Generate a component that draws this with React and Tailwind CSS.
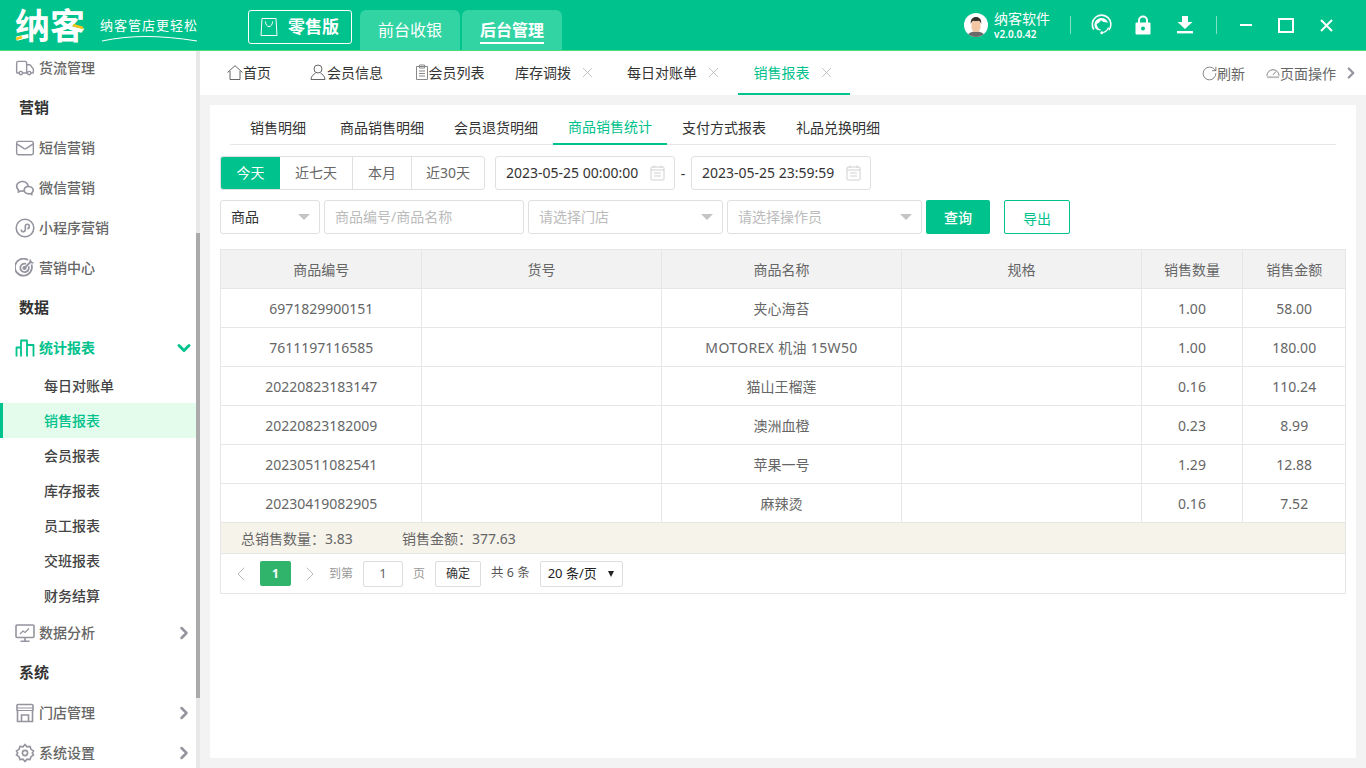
import React from 'react';
import { ChevronRight, ChevronLeft, ChevronDown, X, Truck, Mail, RotateCw } from 'lucide-react';
import { RiWechatLine } from 'react-icons/ri';

const ROWS = [
  ['6971829900151', '夹心海苔', '1.00', '58.00'],
  ['7611197116585', 'MOTOREX 机油 15W50', '1.00', '180.00'],
  ['20220823183147', '猫山王榴莲', '0.16', '110.24'],
  ['20220823182009', '澳洲血橙', '0.23', '8.99'],
  ['20230511082541', '苹果一号', '1.29', '12.88'],
  ['20230419082905', '麻辣烫', '0.16', '7.52'],
];

const SUB_TABS = ['销售明细', '商品销售明细', '会员退货明细', '商品销售统计', '支付方式报表', '礼品兑换明细'];
const REPORTS = ['每日对账单', '销售报表', '会员报表', '库存报表', '员工报表', '交班报表', '财务结算'];

function MiniProgramIcon() {
  return (
    <svg width="20" height="20" viewBox="0 0 20 20" fill="none" stroke="#94949f" strokeWidth="1.6">
      <circle cx="10" cy="10" r="8.8" />
      <path d="M6.2 11.5c0 1.4 1 2.3 2.1 2.3s2-.9 2-2.2V8.4c0-1.3.9-2.2 2-2.2s2 .9 2 2.2-1 2.2-2.1 2.2" />
    </svg>
  );
}

function TargetIcon() {
  return (
    <svg width="20" height="20" viewBox="0 0 20 20" fill="none" stroke="#94949f" strokeWidth="1.8">
      <path d="M16.500 6.500A8.500 8.500 0 1 1 13 2" />
      <path d="M13.600 8.300A4.300 4.300 0 1 1 11 5.800" />
      <circle cx="9.500" cy="10" r="1.200" fill="#94949f" />
      <path d="M9.500 10l7-7" />
      <path d="M15 1.500l.6 2.900 2.900.6" strokeWidth="1.500" />
    </svg>
  );
}

function BarsIcon() {
  return (
    <svg width="20" height="20" viewBox="0 0 20 20" fill="none" stroke="#00c28c" strokeWidth="1.800" strokeLinejoin="round">
      <path d="M1.500 18.500v-9h4.500v9M6 18.500V2.500h6v16M12 18.500V7h6.500v11.500" />
    </svg>
  );
}

function MonitorIcon() {
  return (
    <svg width="20" height="20" viewBox="0 0 20 20" fill="none" stroke="#94949f" strokeWidth="1.600">
      <rect x="1" y="2" width="18" height="12.500" rx="1" />
      <path d="M10 14.500v3.500M5.500 18.200h9" />
      <path d="M5 11l3-3 2 1.500L14 5.500" strokeWidth="1.200" />
    </svg>
  );
}

function StoreIcon() {
  return (
    <svg width="20" height="20" viewBox="0 0 20 20" fill="none" stroke="#94949f" strokeWidth="1.600">
      <path d="M3 1.500h14a1 1 0 0 1 1 1V8M2 8V2.500a1 1 0 0 1 1-1" />
      <path d="M2 7.500h16M2 5h16" strokeWidth="1.200" />
      <path d="M2.500 8v10.500h15V8" />
      <path d="M6.500 18.500V12h7v6.500" />
    </svg>
  );
}

function GearIcon() {
  return (
    <svg width="20" height="20" viewBox="0 0 20 20" fill="none" stroke="#94949f" strokeWidth="1.600">
      <path d="M10 1.500l2 2.300 3-.4 1 2.900 2.500 1.700L17.300 10l1.200 2-2.500 1.700-1 2.900-3-.4-2 2.300-2-2.300-3 .4-1-2.900L1.500 12l1.200-2-1.200-2L4 6.300l1-2.900 3 .4z" />
      <circle cx="10" cy="10" r="2.600" />
    </svg>
  );
}

function CalendarIcon() {
  return (
    <svg width="15" height="16" viewBox="0 0 15 16" fill="none" stroke="#d0d0d0" strokeWidth="1">
      <rect x="1" y="2" width="13" height="13" rx="1" />
      <path d="M1 5h13M4 .5v2.500M11 .5v2.500M4 8h7M4 11h7" />
    </svg>
  );
}

function Caret() {
  return <span className="w-0 h-0 mt-[2px] border-x-[6px] border-x-transparent border-t-[6px] border-t-[#c4c4c4]" />;
}

function Headset() {
  return (
    <svg width="21" height="22" viewBox="0 0 21 22" fill="none">
      <path d="M2.800 15.500A9.300 9.300 0 1 1 18 16" stroke="#fff" strokeWidth="1.600" />
      <path d="M3.500 10c.5-3.500 3.500-6 7-6 3 0 5.500 1.800 6.500 4.500-2.500.2-5.500-.4-7-2.200C9 8.200 7 9.500 5.600 10c.4 3 2.300 5.500 5 6-2.500 1.300-7.700-.5-7.100-6z" fill="#fff" />
      <path d="M17.500 13.500c-1 2.800-3.200 4.500-5.500 5" stroke="#fff" strokeWidth="1.200" />
      <circle cx="10.800" cy="18.700" r="1.500" fill="#fff" />
    </svg>
  );
}

function LockIcon() {
  return (
    <svg width="16" height="20" viewBox="0 0 16 20" className="block">
      <path d="M4 8V5.500a4 4 0 0 1 8 0V8" fill="none" stroke="#fff" strokeWidth="2" />
      <path fillRule="evenodd" d="M1.500 7.500h13a1 1 0 0 1 1 1v10a1 1 0 0 1-1 1h-13a1 1 0 0 1-1-1v-10a1 1 0 0 1 1-1zM8 11.500a2 2 0 1 0 0 4 2 2 0 0 0 0-4z" fill="#fff" />
    </svg>
  );
}

function DownloadIcon() {
  return (
    <svg width="16" height="18" viewBox="0 0 16 18" fill="#fff" className="block">
      <path d="M5 0h6v6h4.500L8 13 .5 6H5z" />
      <rect x="0" y="15" width="16" height="2.400" />
    </svg>
  );
}

function Avatar() {
  return (
    <svg width="24" height="24" viewBox="0 0 24 24" className="shrink-0">
      <clipPath id="avatar-clip"><circle cx="12" cy="12" r="12" /></clipPath>
      <g clipPath="url(#avatar-clip)">
        <rect width="24" height="24" fill="#fff" />
        <path d="M3 25c0-5 4-6.500 9-6.500s9 1.500 9 6.500z" fill="#6b6b6b" />
        <rect x="7.500" y="6" width="9" height="13" rx="4.500" fill="#f3c6a5" />
        <path d="M6.800 11c-.5-5 2-7 5.200-7s5.700 2 5.200 7c-.5-2-1.500-3-2.500-3.300-2 .4-4 .4-5.400 0-1 .3-2 1.300-2.500 3.300z" fill="#33302e" />
      </g>
    </svg>
  );
}

function SideItem({ icon, label, chevron, active }) {
  return (
    <div className={`h-10 flex items-center pl-[15px] pr-[2px] text-[14px] ${active ? 'text-[#00c28c] font-bold' : 'text-[#666] font-medium'}`}>
      <span className="w-[20px] flex justify-center mr-[4px]">{icon}</span>
      <span className="flex-1 mb-[2px]">{label}</span>
      {chevron === 'right' && <ChevronRight size={20} strokeWidth={3} className="text-[#94949f]" />}
      {chevron === 'down' && <ChevronDown size={20} strokeWidth={3.500} className="text-[#00c28c]" />}
    </div>
  );
}

function SideTitle({ label }) {
  return <div className="h-10 flex items-center pl-[19px] pb-[2px] text-[15px] font-bold text-[#333]">{label}</div>;
}

function TopTab({ icon, label, closable, active, width }) {
  return (
    <div className={`h-full flex items-center justify-center text-[14px] ${width} ${active ? 'text-[#00c28c] border-b-2 border-[#00c28c]' : 'text-[#333] border-b-2 border-transparent'}`}>
      {icon}
      <span>{label}</span>
      {closable && <X size={17} strokeWidth={1} className="ml-[8px] text-[#aaa]" />}
    </div>
  );
}

export default function App() {
  return (
    <div className="w-[1366px] h-[768px] overflow-hidden flex flex-col bg-[#f3f3f3] font-['Noto_Sans','Noto_Sans_CJK_SC',sans-serif]">

      {/* header */}
      <header className="h-[51px] shrink-0 bg-[#00c28c] border-b border-[#4fdc7e] flex items-stretch text-white">
        <div className="w-[248px] pl-[15px] flex items-center gap-[15px]">
          <div className="relative w-[70px] text-[35px] leading-none font-bold whitespace-nowrap">
            纳客
            <svg className="absolute left-0 top-0" width="70" height="35" viewBox="0 0 70 35" fill="none" stroke="#f5c518" strokeWidth="2.500">
              <path d="M1 31l6-2M58 17l10 3" />
            </svg>
          </div>
          <div className="relative h-[32px] w-[98px] shrink-0">
            <div className="mt-[6px] text-[13px] leading-[20px] tracking-[1px] whitespace-nowrap">纳客管店更轻松</div>
            <svg className="absolute left-0 top-[25px]" width="98" height="9" viewBox="0 0 98 9" fill="none">
              <path d="M2 7C30 1 60 1 97 7" stroke="#fff" strokeWidth="1" />
            </svg>
          </div>
        </div>
        <div className="w-[104px] h-[34px] mt-[10px] mr-[8px] border border-white rounded-[3px] flex items-center pl-[10px] gap-[9px]">
          <svg width="20" height="20" viewBox="0 0 20 20" fill="none" stroke="#fff" strokeWidth="1">
            <path d="M3 1.500h14l1 17H2z" />
            <path d="M6.500 4.500c0 3 1.500 5 3.500 5s3.500-2 3.500-5" />
          </svg>
          <span className="text-[17px] font-bold whitespace-nowrap">零售版</span>
        </div>
        <div className="w-[100px] h-[40px] mt-[10px] bg-[#33d4a4] rounded-t-[6px] flex items-center justify-center text-[16px] mr-[2px]">前台收银</div>
        <div className="w-[100px] h-[40px] mt-[10px] bg-[#33d4a4] rounded-t-[6px] flex items-center justify-center text-[16px] font-bold">
          <span className="border-b-2 border-white leading-[24px] mt-[1px]">后台管理</span>
        </div>
        <div className="flex-1" />
        <div className="flex items-center pr-[33px]">
          <Avatar />
          <div className="ml-[6px] w-[76px]">
            <div className="text-[14px] leading-[17px]">纳客软件</div>
            <div className="text-[10px] leading-[14px] font-semibold">v2.0.0.42</div>
          </div>
          <span className="w-px h-[18px] bg-white/50 mr-[20px]" />
          <Headset />
          <span className="ml-[23px]"><LockIcon /></span>
          <span className="ml-[26px]"><DownloadIcon /></span>
          <span className="w-px h-[18px] bg-white/50 ml-[23px]" />
          <span className="ml-[23px] w-[12px] h-[2px] bg-white" />
          <span className="ml-[26px] w-[16px] h-[15px] border-2 border-white" />
          <svg className="ml-[26px]" width="13" height="13" viewBox="0 0 13 13" stroke="#fff" strokeWidth="2">
            <path d="M1 1l11 11M12 1L1 12" />
          </svg>
        </div>
      </header>

      <div className="flex-1 flex min-h-0">
        {/* sidebar */}
        <aside className="relative w-[200px] shrink-0 bg-white overflow-hidden">
          <div className="mt-[-3px] w-[196px]">
            <SideItem icon={<Truck size={20} strokeWidth={1.700} className="text-[#94949f]" />} label="货流管理" />
            <SideTitle label="营销" />
            <SideItem icon={<Mail size={20} strokeWidth={1.700} className="text-[#94949f]" />} label="短信营销" />
            <SideItem icon={<RiWechatLine size={20} className="text-[#94949f]" />} label="微信营销" />
            <SideItem icon={<MiniProgramIcon />} label="小程序营销" />
            <SideItem icon={<TargetIcon />} label="营销中心" />
            <SideTitle label="数据" />
            <SideItem icon={<BarsIcon />} label="统计报表" chevron="down" active />
            {REPORTS.map((r) => (
              <div key={r} className={`h-[35px] flex items-center text-[14px] font-medium ${r === '销售报表' ? 'bg-[#e4fcec] text-[#00c28c] border-l-[3px] border-[#00c28c] pl-[41px]' : 'text-[#444] pl-[44px]'}`}>{r}</div>
            ))}
            <SideItem icon={<MonitorIcon />} label="数据分析" chevron="right" />
            <SideTitle label="系统" />
            <SideItem icon={<StoreIcon />} label="门店管理" chevron="right" />
            <SideItem icon={<GearIcon />} label="系统设置" chevron="right" />
          </div>
          {/* scrollbar */}
          <div className="absolute right-0 top-0 bottom-0 w-[4px] bg-[#e8e8e8]">
            <div className="absolute left-0 right-0 top-[182px] h-[465px] bg-[#aaaaaa]" />
          </div>
        </aside>

        <main className="flex-1 min-w-0 flex flex-col">
          {/* page tabs */}
          <div className="h-[44px] shrink-0 bg-white flex items-stretch text-[14px]">
            <div className="flex items-stretch pl-[27px]">
              <TopTab width="w-[44px]" label="首页" icon={<svg width="16" height="15" viewBox="0 0 16 15" fill="none" stroke="#666"><path d="M.5 7.500L8 .7l7.500 6.800M3 6v8.500h10V6" /></svg>} />
              <span className="w-[39px]" />
              <TopTab width="w-[73px]" label="会员信息" icon={<svg width="17" height="16" viewBox="0 0 17 16" fill="none" stroke="#666"><circle cx="8" cy="5" r="4" /><path d="M1 15.500c0-3.500 3-5.500 4.500-6.300M15 15.500c0-3.500-3-5.500-4.500-6.300M1 15.500h14" /></svg>} />
              <span className="w-[31px]" />
              <TopTab width="w-[71px]" label="会员列表" icon={<svg width="14" height="16" viewBox="0 0 14 16" fill="none" stroke="#888"><path d="M1.500 2.500h11v13h-11zM4.500 1h5v3h-5zM4 7h6M4 9.500h6M4 12h6" /></svg>} />
              <span className="w-[30px]" />
              <TopTab width="w-[81px]" label="库存调拨" closable />
              <span className="w-[31px]" />
              <TopTab width="w-[95px]" label="每日对账单" closable />
              <span className="w-[16px]" />
              <TopTab width="w-[112px]" label="销售报表" closable active />
            </div>
            <div className="flex-1" />
            <div className="flex items-center text-[#666] pr-[6px]">
              <RotateCw size={17} strokeWidth={1.100} className="-mr-[1px]" />
              <span>刷新</span>
              <svg className="ml-[21px]" width="14" height="14" viewBox="0 0 15 14" fill="none" stroke="#777">
                <path d="M1 10a6.500 6.500 0 1 1 13 0" />
                <path d="M7.500 9l3-3.500" />
                <path d="M1 11.500h13" stroke="#bbb" strokeWidth="2" />
              </svg>
              <span>页面操作</span>
              <ChevronRight size={18} strokeWidth={3} className="ml-[6px] text-[#94949f]" />
            </div>
          </div>

          {/* report panel */}
          <div className="flex-1 mt-[10px] mb-[10px] mx-[10px] bg-white pt-[5px] px-[10px] min-h-0">
            <div className="ml-[10px] mr-[10px] pl-[5px] h-[35px] border-b border-[#e6e6e6] flex text-[14px] text-[#333]">
              {SUB_TABS.map((t, i) => (
                <div key={t} className={`h-[35px] px-[15px] flex items-center ${i === 0 ? 'mr-[4px]' : ''} ${t === '商品销售统计' ? 'text-[#00c28c] border-b-2 border-[#00c28c]' : ''}`}>{t}</div>
              ))}
            </div>

            {/* date filters */}
            <div className="mt-[11px] flex items-center text-[14px] text-[#666]">
              <div className="flex h-[34px] border border-[#e0e0e0] rounded-[3px] overflow-hidden">
                <div className="w-[59px] bg-[#00c28c] text-white flex items-center justify-center pb-[2px]">今天</div>
                <div className="w-[73px] border-r border-[#e0e0e0] flex items-center justify-center pb-[2px]">近七天</div>
                <div className="w-[59px] border-r border-[#e0e0e0] flex items-center justify-center pb-[2px]">本月</div>
                <div className="w-[72px] flex items-center justify-center pb-[2px]">近30天</div>
              </div>
              <div className="ml-[10px] w-[180px] h-[34px] border border-[#e0e0e0] rounded-[3px] flex items-center justify-between pl-[10px] pr-[9px] pb-[1px] text-[#333] text-[14px]">
                <span>2023-05-25 00:00:00</span><CalendarIcon />
              </div>
              <span className="w-[16px] text-center text-[#333]">-</span>
              <div className="w-[180px] h-[34px] border border-[#e0e0e0] rounded-[3px] flex items-center justify-between pl-[10px] pr-[9px] pb-[1px] text-[#333] text-[14px]">
                <span>2023-05-25 23:59:59</span><CalendarIcon />
              </div>
            </div>

            {/* search filters */}
            <div className="mt-[10px] flex items-center gap-[4px] text-[14px] text-[#bbb]">
              <div className="w-[100px] h-[34px] border border-[#e0e0e0] rounded-[3px] flex items-center justify-between pl-[10px] pr-[9px] pb-[2px] text-[#333]">商品<Caret /></div>
              <div className="w-[200px] h-[34px] border border-[#e0e0e0] rounded-[3px] flex items-center pl-[10px] pb-[2px]">商品编号/商品名称</div>
              <div className="w-[195px] h-[34px] border border-[#e0e0e0] rounded-[3px] flex items-center justify-between pl-[10px] pr-[9px] pb-[2px]">请选择门店<Caret /></div>
              <div className="w-[195px] h-[34px] border border-[#e0e0e0] rounded-[3px] flex items-center justify-between pl-[10px] pr-[9px] pb-[2px]">请选择操作员<Caret /></div>
              <div className="w-[64px] h-[34px] bg-[#00c28c] rounded-[2px] text-white flex items-center justify-center font-medium">查询</div>
              <div className="ml-[10px] w-[66px] h-[34px] border border-[#00c28c] rounded-[2px] text-[#00c28c] flex items-center justify-center pt-[2px]">导出</div>
            </div>

            {/* table */}
            <div className="mt-[15px] w-[1126px] border border-t-0 border-[#e6e6e6]">
              <table className="w-full table-fixed border-collapse text-[14px] text-[#666]">
                <colgroup>
                  <col className="w-[200px]" />
                  <col className="w-[240px]" />
                  <col className="w-[240px]" />
                  <col className="w-[240px]" />
                  <col className="w-[101px]" />
                  <col />
                </colgroup>
                <thead>
                  <tr className="h-[39px] bg-[#f2f2f2]">
                    {['商品编号', '货号', '商品名称', '规格', '销售数量', '销售金额'].map((h, i) => (
                      <th key={h} className={`font-normal pl-[1px] border border-[#e6e6e6] ${i === 0 ? 'border-l-0' : ''} ${i === 5 ? 'border-r-0' : ''}`}>{h}</th>
                    ))}
                  </tr>
                </thead>
                <tbody>
                  {ROWS.map((r) => (
                    <tr key={r[0]} className="h-[39px] text-center">
                      <td className="pl-[1px] border border-l-0 border-[#e6e6e6]">{r[0]}</td>
                      <td className="border border-[#e6e6e6]"></td>
                      <td className={`pl-[1px] border border-[#e6e6e6] ${r[1].startsWith('MOTOREX') ? 'tracking-[0.35px]' : ''}`}>{r[1]}</td>
                      <td className="border border-[#e6e6e6]"></td>
                      <td className="pl-[1px] border border-[#e6e6e6]">{r[2]}</td>
                      <td className="pl-[1px] border border-r-0 border-[#e6e6e6]">{r[3]}</td>
                    </tr>
                  ))}
                </tbody>
              </table>
              <div className="h-[30px] bg-[#f6f3ea] flex items-center pl-[20px] text-[14px] text-[#666]">
                <span className="w-[161px]">总销售数量：3.83</span>
                <span>销售金额：377.63</span>
              </div>
              <div className="h-[40px] border-t border-[#e6e6e6] flex items-center text-[12px] text-[#888]">
                <ChevronLeft size={24} strokeWidth={1} className="ml-[8px] text-[#bbb]" />
                <div className="ml-[7px] w-[31px] h-[25px] bg-[#30b46c] rounded-[2px] text-white font-bold flex items-center justify-center">1</div>
                <ChevronRight size={24} strokeWidth={1} className="ml-[7px] text-[#bbb]" />
                <span className="ml-[7px] text-[#999]">到第</span>
                <div className="ml-[10px] w-[40px] h-[26px] border border-[#ddd] rounded-[2px] flex items-center justify-center text-[#666] text-[13px]">1</div>
                <span className="ml-[10px] text-[#999]">页</span>
                <div className="ml-[10px] w-[46px] h-[26px] border border-[#ddd] rounded-[2px] flex items-center justify-center text-[#333]">确定</div>
                <span className="ml-[10px] text-[#555] whitespace-pre text-[12.500px]">共 6 条</span>
                <div className="ml-[10px] w-[83px] h-[26px] border border-[#ddd] rounded-[2px] flex items-center justify-between pl-[7px] pr-[8px] text-[#222] text-[13px]">
                  <span className="whitespace-pre">20 条/页</span>
                  <span className="w-0 h-0 border-x-[3.500px] border-x-transparent border-t-[6px] border-t-[#222]" />
                </div>
              </div>
            </div>
          </div>
        </main>
      </div>
    </div>
  );
}
